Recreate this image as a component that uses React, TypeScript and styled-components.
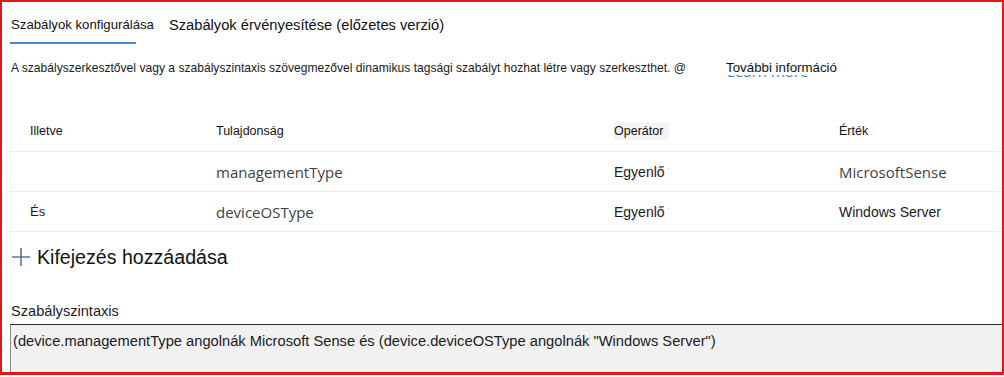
import { styled, createGlobalStyle } from 'styled-components'

const GlobalStyle = createGlobalStyle`
  html, body {
    margin: 0;
    padding: 0;
    background: #ffffff;
  }
  body {
    font-family: "Liberation Sans", Arial, sans-serif;
    color: #1b1b1b;
  }
`

const Frame = styled.div`
  box-sizing: border-box;
  width: 1004px;
  height: 375px;
  border: 2px solid #e3171b;
  border-bottom-width: 3px;
  display: flex;
  flex-direction: column;
  overflow: hidden;
`

const Content = styled.div`
  padding-left: 8px;
  display: flex;
  flex-direction: column;
  flex: 1;
`

const TabBar = styled.div`
  display: flex;
  align-items: flex-end;
  gap: 14px;
  padding-top: 11px;
  height: 31px;
`

const Tab = styled.div<{ $active?: boolean; $size: number }>`
  position: relative;
  height: 29px;
  font-size: ${p => p.$size}px;
  line-height: 20px;
  padding-left: 1px;
  color: #111;
  white-space: nowrap;
  &::after {
    content: '';
    display: ${p => (p.$active ? 'block' : 'none')};
    position: absolute;
    left: 0;
    bottom: 0;
    width: 126px;
    height: 2px;
    background: #4a8ad0;
  }
`

const Description = styled.div`
  display: flex;
  align-items: flex-start;
  margin-top: 16px;
  height: 50px;
  font-size: 12.1px;
  line-height: 16px;
  padding-left: 1px;
  white-space: nowrap;
`

const MoreWrap = styled.span`
  position: relative;
  margin-left: 40px;
`

const LearnMore = styled.span`
  position: absolute;
  left: 1px;
  top: 3px;
  font-family: "Open Sans", sans-serif;
  font-size: 15px;
  color: #3a7fc0;
  white-space: nowrap;
`

const MoreText = styled.span`
  position: relative;
  display: inline-block;
  background: #ffffff;
  font-size: 13.3px;
  line-height: 14px;
  height: 14px;
  color: #111;
`

const Table = styled.div`
  display: grid;
  grid-template-columns: 206px 398px 225px 1fr;
`

const Cell = styled.div<{ $head?: boolean; $first?: boolean }>`
  height: ${p => (p.$head ? 40 : 39)}px;
  display: flex;
  align-items: center;
  border-bottom: 1px solid #ebebeb;
  padding-left: ${p => (p.$first ? 20 : 0)}px;
  padding-top: ${p => (p.$head ? 1 : 0)}px;
`

const HeadText = styled.span<{ $shade?: boolean }>`
  font-size: 12.5px;
  color: #111;
  padding: 2px 6px 2px 0;
  background: ${p => (p.$shade ? '#f4f4f4' : 'transparent')};
`

const ValueText = styled.span<{ $segoe?: boolean; $size: number }>`
  font-family: ${p => (p.$segoe ? '"Open Sans", sans-serif' : '"Liberation Sans", Arial, sans-serif')};
  font-size: ${p => p.$size}px;
  color: ${p => (p.$segoe ? '#3f3f3f' : '#1a1a1a')};
`

const AddRow = styled.div`
  display: flex;
  align-items: center;
  gap: 6px;
  height: 50px;
  padding-left: 1px;
  font-size: 19.6px;
  color: #111;
`

const SyntaxLabel = styled.div`
  margin-top: 21px;
  padding-left: 1px;
  font-size: 14.6px;
  line-height: 16px;
  height: 21px;
`

const SyntaxBox = styled.div`
  flex: 1;
  background: #f1f1f2;
  border-top: 1px solid #2a2a2a;
  border-left: 1px solid #8a8a8a;
  padding: 8px 0 0 2px;
  font-size: 14.7px;
  line-height: 17px;
  color: #1b1b1b;
  white-space: nowrap;
`

const PlusIcon = () => (
  <svg width="20" height="20" viewBox="0 0 20 20">
    <path d="M10 1v18M1 10h18" stroke="#5d7896" strokeWidth="1.6" fill="none" />
  </svg>
)

const rows = [
  { andOr: '', prop: 'managementType', op: 'Egyenlő', value: 'MicrosoftSense', segoe: true },
  { andOr: 'És', prop: 'deviceOSType', op: 'Egyenlő', value: 'Windows Server', segoe: false },
]

const App = () => {
  return (
    <>
      <GlobalStyle />
      <Frame>
        <Content>
          <TabBar>
            <Tab $active $size={13.2}>Szabályok konfigurálása</Tab>
            <Tab $size={14.7}>Szabályok érvényesítése (előzetes verzió)</Tab>
          </TabBar>
          <Description>
            <span>
              A szabályszerkesztővel vagy a szabályszintaxis szövegmezővel dinamikus tagsági szabályt hozhat létre vagy szerkeszthet. @
            </span>
            <MoreWrap>
              <LearnMore>Learn more</LearnMore>
              <MoreText>További információ</MoreText>
            </MoreWrap>
          </Description>
          <Table>
            <Cell $head $first><HeadText>Illetve</HeadText></Cell>
            <Cell $head><HeadText>Tulajdonság</HeadText></Cell>
            <Cell $head><HeadText $shade>Operátor</HeadText></Cell>
            <Cell $head><HeadText>Érték</HeadText></Cell>
            {rows.map((r, i) => (
              <>
                <Cell key={`a${i}`} $first><ValueText $size={13}>{r.andOr}</ValueText></Cell>
                <Cell key={`p${i}`}><ValueText $segoe $size={15}>{r.prop}</ValueText></Cell>
                <Cell key={`o${i}`}><ValueText $size={14}>{r.op}</ValueText></Cell>
                <Cell key={`v${i}`}>
                  <ValueText $segoe={r.segoe} $size={r.segoe ? 15 : 14}>{r.value}</ValueText>
                </Cell>
              </>
            ))}
          </Table>
          <AddRow>
            <PlusIcon />
            <span>Kifejezés hozzáadása</span>
          </AddRow>
          <SyntaxLabel>Szabályszintaxis</SyntaxLabel>
          <SyntaxBox>
            (device.managementType angolnák Microsoft Sense és (device.deviceOSType angolnák "Windows Server")
          </SyntaxBox>
        </Content>
      </Frame>
    </>
  )
}

export default App
